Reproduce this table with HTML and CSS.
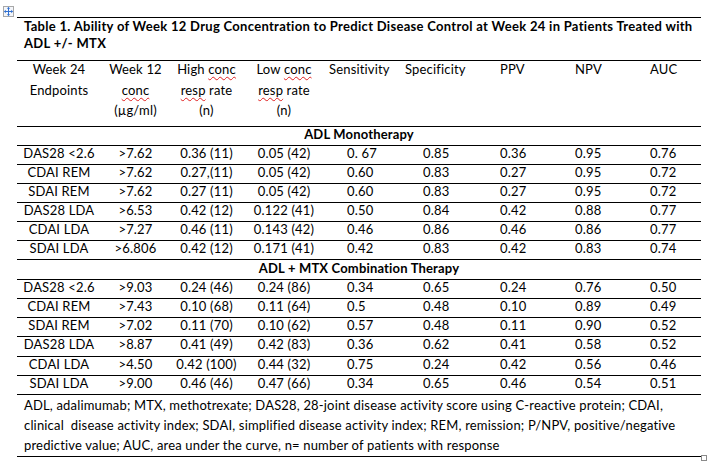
FILE: index.html
```html
<!DOCTYPE html>
<html>
<head>
<meta charset="utf-8">
<link rel="stylesheet" href="styles.css">
</head>
<body>
<div class="page">
  <div class="move-handle">
    <svg width="9" height="9" viewBox="0 0 9 9"><path d="M4.5 0.5V8.5M0.5 4.5H8.5" stroke="#2f6fd0" stroke-width="1" fill="none"/><path d="M4.5 0L2.8 1.8H6.2Z M4.5 9L2.8 7.2H6.2Z M0 4.5L1.8 2.8V6.2Z M9 4.5L7.2 2.8V6.2Z" fill="#2f6fd0"/></svg>
  </div>
  <div class="tbl">
    <div class="title">Table 1. Ability of Week 12 Drug Concentration to Predict Disease Control at Week 24 in Patients Treated with<br>ADL +/- MTX</div>
    <div class="row head">
      <div class="c">Week 24<br>Endpoints</div>
      <div class="c">Week 12<br><span class="sp">conc</span><br>(µg/ml)</div>
      <div class="c">High <span class="sp">conc</span><br><span class="sp">resp</span> rate<br>(n)</div>
      <div class="c">Low <span class="sp">conc</span><br><span class="sp">resp</span> rate<br>(n)</div>
      <div class="l h5">Sensitivity</div>
      <div class="l h6">Specificity</div>
      <div class="l h7">PPV</div>
      <div class="l h8">NPV</div>
      <div class="l h9">AUC</div>
    </div>
    <div class="section">ADL Monotherapy</div>
    <div class="row data"><div class="c">DAS28 &lt;2.6</div><div class="c">&gt;7.62</div><div class="c">0.36 (11)</div><div class="c">0.05 (42)</div><div class="l d5">0. 67</div><div class="l d6">0.85</div><div class="l d7">0.36</div><div class="l d8">0.95</div><div class="l d9">0.76</div></div>
    <div class="row data"><div class="c">CDAI REM</div><div class="c">&gt;7.62</div><div class="c">0.27,(11)</div><div class="c">0.05 (42)</div><div class="l d5">0.60</div><div class="l d6">0.83</div><div class="l d7">0.27</div><div class="l d8">0.95</div><div class="l d9">0.72</div></div>
    <div class="row data"><div class="c">SDAI REM</div><div class="c">&gt;7.62</div><div class="c">0.27 (11)</div><div class="c">0.05 (42)</div><div class="l d5">0.60</div><div class="l d6">0.83</div><div class="l d7">0.27</div><div class="l d8">0.95</div><div class="l d9">0.72</div></div>
    <div class="row data"><div class="c">DAS28 LDA</div><div class="c">&gt;6.53</div><div class="c">0.42 (12)</div><div class="c">0.122 (41)</div><div class="l d5">0.50</div><div class="l d6">0.84</div><div class="l d7">0.42</div><div class="l d8">0.88</div><div class="l d9">0.77</div></div>
    <div class="row data"><div class="c">CDAI LDA</div><div class="c">&gt;7.27</div><div class="c">0.46 (11)</div><div class="c">0.143 (42)</div><div class="l d5">0.46</div><div class="l d6">0.86</div><div class="l d7">0.46</div><div class="l d8">0.86</div><div class="l d9">0.77</div></div>
    <div class="row data"><div class="c">SDAI LDA</div><div class="c">&gt;6.806</div><div class="c">0.42 (12)</div><div class="c">0.171 (41)</div><div class="l d5">0.42</div><div class="l d6">0.83</div><div class="l d7">0.42</div><div class="l d8">0.83</div><div class="l d9">0.74</div></div>
    <div class="section second">ADL + MTX Combination Therapy</div>
    <div class="row data"><div class="c">DAS28 &lt;2.6</div><div class="c">&gt;9.03</div><div class="c">0.24 (46)</div><div class="c">0.24 (86)</div><div class="l d5">0.34</div><div class="l d6">0.65</div><div class="l d7">0.24</div><div class="l d8">0.76</div><div class="l d9">0.50</div></div>
    <div class="row data"><div class="c">CDAI REM</div><div class="c">&gt;7.43</div><div class="c">0.10 (68)</div><div class="c">0.11 (64)</div><div class="l d5">0.5</div><div class="l d6">0.48</div><div class="l d7">0.10</div><div class="l d8">0.89</div><div class="l d9">0.49</div></div>
    <div class="row data"><div class="c">SDAI REM</div><div class="c">&gt;7.02</div><div class="c">0.11 (70)</div><div class="c">0.10 (62)</div><div class="l d5">0.57</div><div class="l d6">0.48</div><div class="l d7">0.11</div><div class="l d8">0.90</div><div class="l d9">0.52</div></div>
    <div class="row data tall"><div class="c">DAS28 LDA</div><div class="c">&gt;8.87</div><div class="c">0.41 (49)</div><div class="c">0.42 (83)</div><div class="l d5">0.36</div><div class="l d6">0.62</div><div class="l d7">0.41</div><div class="l d8">0.58</div><div class="l d9">0.52</div></div>
    <div class="row data"><div class="c">CDAI LDA</div><div class="c">&gt;4.50</div><div class="c">0.42 (100)</div><div class="c">0.44 (32)</div><div class="l d5">0.75</div><div class="l d6">0.24</div><div class="l d7">0.42</div><div class="l d8">0.56</div><div class="l d9">0.46</div></div>
    <div class="row data"><div class="c">SDAI LDA</div><div class="c">&gt;9.00</div><div class="c">0.46 (46)</div><div class="c">0.47 (66)</div><div class="l d5">0.34</div><div class="l d6">0.65</div><div class="l d7">0.46</div><div class="l d8">0.54</div><div class="l d9">0.51</div></div>
    <div class="foot">ADL, adalimumab; MTX, methotrexate; DAS28, 28-joint disease activity score using C-reactive protein; CDAI,<br>clinical&nbsp; disease activity index; SDAI, simplified disease activity index; REM, remission; P/NPV, positive/negative<br>predictive value; AUC, area under the curve, n= number of patients with response</div>
  </div>
  <div class="resize-handle"></div>
</div>
</body>
</html>
```
FILE: styles.css
```css
html, body {
  margin: 0;
  padding: 0;
  background: #fff;
}
body {
  font-family: Lato, "Liberation Sans", Arial, sans-serif;
  font-size: 13px;
  letter-spacing: 0.17px;
  color: #000;
}
.page {
  position: relative;
  width: 718px;
  height: 474px;
  padding: 17px 0 0 17px;
  box-sizing: border-box;
}
.move-handle {
  position: absolute;
  left: 3px;
  top: 6px;
  width: 11px;
  height: 11px;
  box-sizing: border-box;
  border: 1px solid #a8a8a8;
  background: #f4f6fa;
  display: flex;
  align-items: center;
  justify-content: center;
}
.move-handle svg {
  display: block;
}
.resize-handle {
  position: absolute;
  left: 701px;
  top: 455px;
  width: 6px;
  height: 6px;
  box-sizing: border-box;
  border: 1px solid #8a8a8a;
  background: #fff;
}
.tbl {
  width: 684px;
}
.title {
  border-top: 1px solid #000;
  border-bottom: 1px solid #000;
  font-weight: bold;
  letter-spacing: 0.3px;
  line-height: 17px;
  padding: 0 0 8px 7px;
  height: 44px;
  box-sizing: border-box;
  white-space: nowrap;
}
.row {
  display: grid;
  grid-template-columns: 84px 69px 73px 82px 75px 95px 75px 75px 56px;
  border-bottom: 1px solid #000;
  box-sizing: border-box;
  align-items: start;
}
.row > div {
  white-space: nowrap;
}
.c {
  text-align: center;
}
.l {
  text-align: left;
}
.head {
  height: 66px;
  line-height: 20.5px;
}
.head > div {
  margin-top: -2px;
}
.h5 { padding-left: 4px; }
.h6, .h7, .h8, .h9 { padding-left: 5px; }
.d5 { padding-left: 22px; }
.d6 { padding-left: 23px; }
.d7, .d8, .d9 { padding-left: 5px; }
.sp {
  text-decoration: underline wavy #e02020;
  text-decoration-thickness: 1px;
  text-underline-offset: 2px;
  text-decoration-skip-ink: none;
}
.data {
  height: 19px;
  line-height: 14px;
}
.data.tall {
  height: 20px;
}
.section {
  height: 19px;
  line-height: 14px;
  font-weight: bold;
  text-align: center;
  border-bottom: 1px solid #000;
  box-sizing: border-box;
}
.section.second {
  height: 20px;
  padding-top: 1px;
}
.foot {
  line-height: 20px;
  padding: 0 0 1px 7px;
  border-bottom: 1px solid #000;
  white-space: nowrap;
}
```
